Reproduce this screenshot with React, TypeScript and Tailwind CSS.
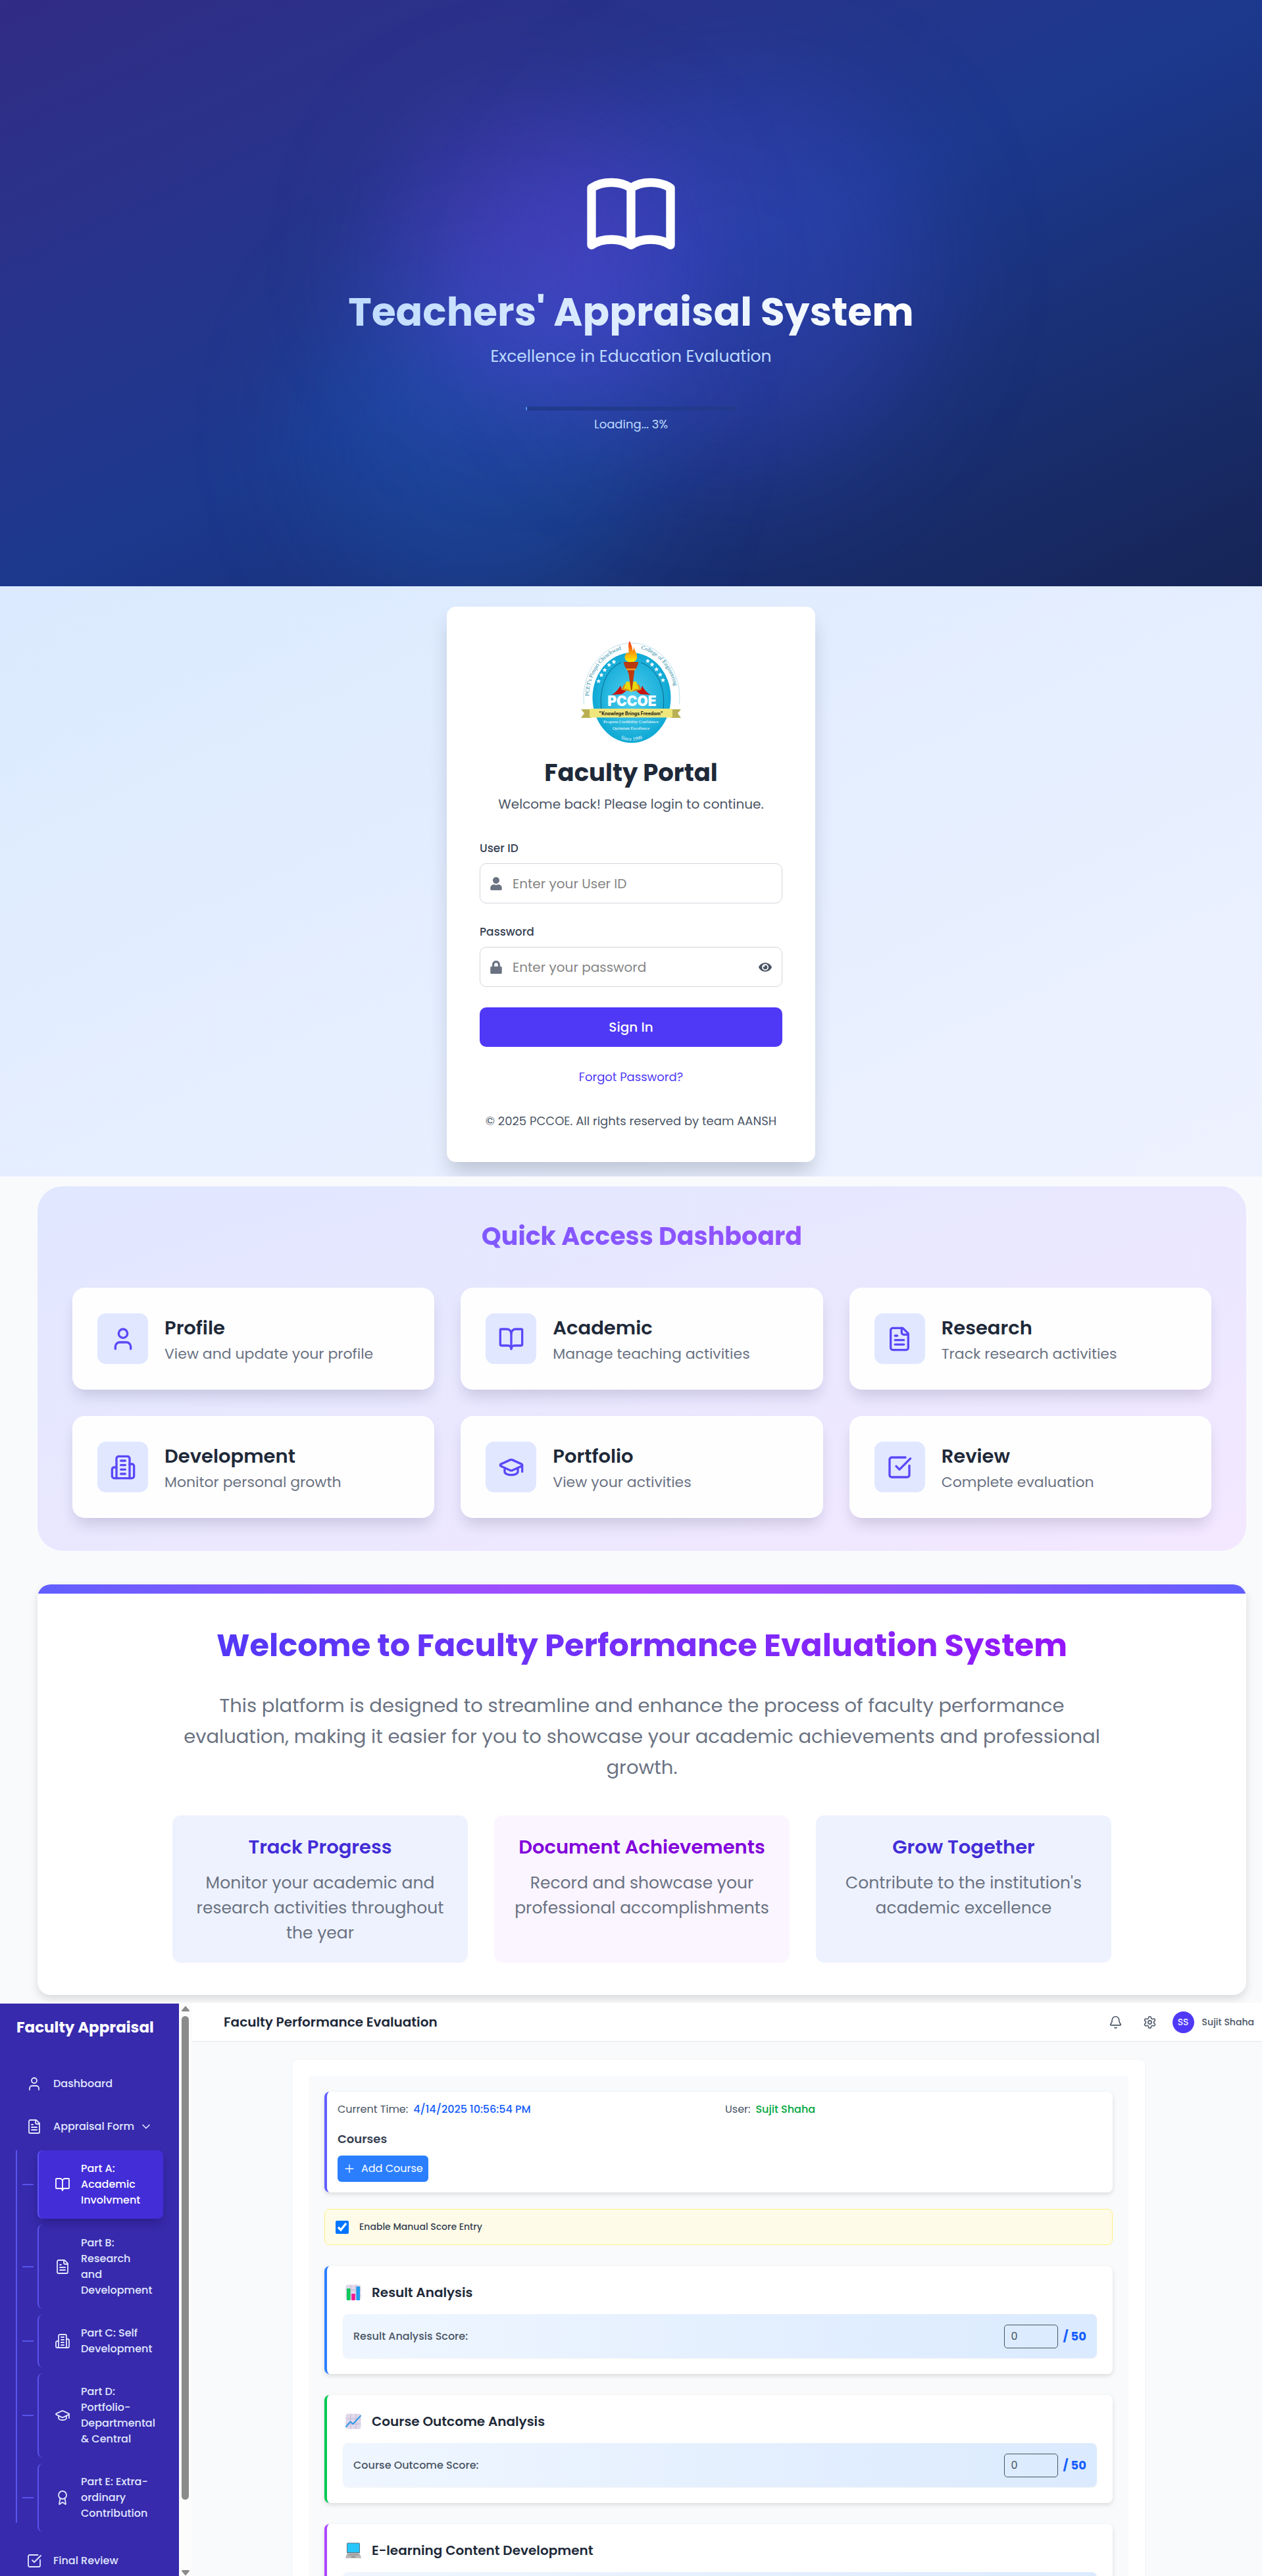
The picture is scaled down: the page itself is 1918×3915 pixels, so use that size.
import React from "react";
import type { ReactNode } from "react";
import { FaEye, FaLock, FaUser } from "react-icons/fa";

/* ---------- line icons ---------- */

type IconProps = { className?: string; strokeWidth?: number };

function LineIcon({ className, strokeWidth = 2, children }: IconProps & { children: ReactNode }) {
  return (
    <svg
      viewBox="0 0 24 24"
      fill="none"
      stroke="currentColor"
      strokeWidth={strokeWidth}
      strokeLinecap="round"
      strokeLinejoin="round"
      aria-hidden="true"
      className={className}
    >
      {children}
    </svg>
  );
}

const UserIcon = (p: IconProps) => (
  <LineIcon {...p}>
    <path d="M19 21v-2a4 4 0 0 0-4-4H9a4 4 0 0 0-4 4v2" />
    <circle cx="12" cy="7" r="4" />
  </LineIcon>
);
const BookIcon = (p: IconProps) => (
  <LineIcon {...p}>
    <path d="M12 7v14" />
    <path d="M3 18a1 1 0 0 1-1-1V4a1 1 0 0 1 1-1h5a4 4 0 0 1 4 4 4 4 0 0 1 4-4h5a1 1 0 0 1 1 1v13a1 1 0 0 1-1 1h-6a3 3 0 0 0-3 3 3 3 0 0 0-3-3z" />
  </LineIcon>
);
const FileIcon = (p: IconProps) => (
  <LineIcon {...p}>
    <path d="M15 2H6a2 2 0 0 0-2 2v16a2 2 0 0 0 2 2h12a2 2 0 0 0 2-2V7Z" />
    <path d="M14 2v4a2 2 0 0 0 2 2h4" />
    <path d="M10 9H8" />
    <path d="M16 13H8" />
    <path d="M16 17H8" />
  </LineIcon>
);
const BuildingIcon = (p: IconProps) => (
  <LineIcon {...p}>
    <path d="M6 22V4a2 2 0 0 1 2-2h8a2 2 0 0 1 2 2v18Z" />
    <path d="M6 12H4a2 2 0 0 0-2 2v6a2 2 0 0 0 2 2h2" />
    <path d="M18 9h2a2 2 0 0 1 2 2v9a2 2 0 0 1-2 2h-2" />
    <path d="M10 6h4" />
    <path d="M10 10h4" />
    <path d="M10 14h4" />
    <path d="M10 18h4" />
  </LineIcon>
);
const CapIcon = (p: IconProps) => (
  <LineIcon {...p}>
    <path d="M21.42 10.922a1 1 0 0 0-.019-1.838L12.83 5.18a2 2 0 0 0-1.66 0L2.6 9.08a1 1 0 0 0 0 1.832l8.57 3.908a2 2 0 0 0 1.66 0z" />
    <path d="M22 10v6" />
    <path d="M6 12.5V16a6 3 0 0 0 12 0v-3.5" />
  </LineIcon>
);
const CheckSquareIcon = (p: IconProps) => (
  <LineIcon {...p}>
    <path d="M21 10.5V19a2 2 0 0 1-2 2H5a2 2 0 0 1-2-2V5a2 2 0 0 1 2-2h12.5" />
    <path d="m9 11 3 3L22 4" />
  </LineIcon>
);
const AwardIcon = (p: IconProps) => (
  <LineIcon {...p}>
    <path d="m15.477 12.89 1.515 8.526a.5.5 0 0 1-.81.47l-3.58-2.687a1 1 0 0 0-1.197 0l-3.586 2.686a.5.5 0 0 1-.81-.469l1.514-8.526" />
    <circle cx="12" cy="8" r="6" />
  </LineIcon>
);
const ChevronIcon = (p: IconProps) => (
  <LineIcon {...p}>
    <path d="m6 9 6 6 6-6" />
  </LineIcon>
);
const PlusIcon = (p: IconProps) => (
  <LineIcon {...p}>
    <path d="M5 12h14" />
    <path d="M12 5v14" />
  </LineIcon>
);
const BellIcon = (p: IconProps) => (
  <LineIcon {...p}>
    <path d="M10.268 21a2 2 0 0 0 3.464 0" />
    <path d="M3.262 15.326A1 1 0 0 0 4 17h16a1 1 0 0 0 .74-1.673C19.41 13.956 18 12.499 18 8A6 6 0 0 0 6 8c0 4.499-1.411 5.956-2.738 7.326" />
  </LineIcon>
);
const GearIcon = (p: IconProps) => (
  <LineIcon {...p}>
    <path d="M12.22 2h-.44a2 2 0 0 0-2 2v.18a2 2 0 0 1-1 1.73l-.43.25a2 2 0 0 1-2 0l-.15-.08a2 2 0 0 0-2.73.73l-.22.38a2 2 0 0 0 .73 2.73l.15.1a2 2 0 0 1 1 1.72v.51a2 2 0 0 1-1 1.74l-.15.09a2 2 0 0 0-.73 2.73l.22.38a2 2 0 0 0 2.73.73l.15-.08a2 2 0 0 1 2 0l.43.25a2 2 0 0 1 1 1.73V20a2 2 0 0 0 2 2h.44a2 2 0 0 0 2-2v-.18a2 2 0 0 1 1-1.73l.43-.25a2 2 0 0 1 2 0l.15.08a2 2 0 0 0 2.73-.73l.22-.39a2 2 0 0 0-.73-2.73l-.15-.08a2 2 0 0 1-1-1.74v-.5a2 2 0 0 1 1-1.74l.15-.09a2 2 0 0 0 .73-2.73l-.22-.38a2 2 0 0 0-2.73-.73l-.15.08a2 2 0 0 1-2 0l-.43-.25a2 2 0 0 1-1-1.73V4a2 2 0 0 0-2-2z" />
    <circle cx="12" cy="12" r="3" />
  </LineIcon>
);

/* ---------- splash ---------- */

function Splash() {
  return (
    <section className="relative flex min-h-[891px] flex-col items-center overflow-hidden bg-linear-to-br from-indigo-900 via-blue-900 to-blue-950 px-4 pt-[244px]">
      <div aria-hidden="true" className="absolute top-[400px] left-[25%] size-[520px] rounded-full bg-[#1f6fd8]/25 blur-[90px]" />
      <div aria-hidden="true" className="absolute top-[130px] left-[43%] size-[580px] rounded-full bg-[#4450e0]/30 blur-[90px]" />
      <div aria-hidden="true" className="absolute top-[180px] left-[31%] size-[440px] rounded-full bg-[#7048f0]/35 blur-[90px]" />
      <div className="relative flex flex-col items-center">
        <LineIcon className="size-40 text-white">
          <path d="M12 6.253v13m0-13C10.832 5.477 9.246 5 7.5 5S4.168 5.477 3 6.253v13C4.168 18.477 5.754 18 7.5 18s3.332.477 4.5 1.253m0-13C13.168 5.477 14.754 5 16.5 5c1.747 0 3.332.477 4.5 1.253v13C19.832 18.477 18.247 18 16.5 18c-1.746 0-3.332.477-4.5 1.253" />
        </LineIcon>
        <h1 className="mt-[34px] bg-linear-to-r from-blue-200 to-white bg-clip-text text-center text-6xl leading-[72px] font-bold text-transparent">
          Teachers' Appraisal System
        </h1>
        <p className="mt-[14px] text-center text-[25px] leading-9 text-blue-200">Excellence in Education Evaluation</p>
        <div role="progressbar" aria-label="Loading" aria-valuenow={3} className="mt-[58px] h-1.5 w-80 overflow-hidden rounded-full bg-[#213a8c]">
          <div className="h-full w-0.5 bg-blue-400" />
        </div>
        <p className="mt-[7px] text-[18px] leading-7 text-blue-200">Loading... 3%</p>
      </div>
    </section>
  );
}

/* ---------- login ---------- */

const LOGO_STARS = [
  [26.7, 63], [31, 53.7], [36, 46], [42.7, 38.3], [50, 33.7],
  [101.5, 32.3], [108, 37.7], [114.7, 45], [120.4, 53], [124.6, 61.5],
];

function CollegeLogo() {
  return (
    <svg viewBox="0 0 153 160" role="img" aria-label="PCCOE" className="h-40 w-[153px]">
      <defs>
        <radialGradient id="disc" cx="0.5" cy="0.5" r="0.55">
          <stop offset="0" stopColor="#52cff0" />
          <stop offset="1" stopColor="#08a5d2" />
        </radialGradient>
        <linearGradient id="flame" x1="0" y1="0" x2="0" y2="1">
          <stop offset="0" stopColor="#f4281c" />
          <stop offset="0.55" stopColor="#ff9a0a" />
          <stop offset="1" stopColor="#fff000" />
        </linearGradient>
        <path id="arcLeft" d="M12 86A66 75 0 0 1 69 13.500" />
        <path id="arcRight" d="M91 14.500A66 75 0 0 1 143 92" />
        <path id="arcBottom" d="M56 149Q77 158 98 149" />
      </defs>
      <path d="M4.500 98A73 83 0 1 1 149.500 98" fill="#fff" stroke="#8fcddd" strokeWidth="0.6" />
      <ellipse cx="77" cy="88.500" rx="59.500" ry="68.500" fill="url(#disc)" />
      <path d="M61 35C38 44 27 76 31 106M91 35C117 44 129 76 125 106" fill="none" stroke="#0a5f80" strokeWidth="0.9" />
      <g fontFamily="Liberation Serif, serif" fontSize="8.500" fill="#1c87a3">
        <text><textPath href="#arcLeft">PCET's Pimpri Chinchwad</textPath></text>
        <text><textPath href="#arcRight">College of Engineering</textPath></text>
      </g>
      {LOGO_STARS.map(([x, y]) => (
        <path
          key={`${x}-${y}`}
          d={`M${x} ${y - 3.4}l1 2.300 2.500.2-1.900 1.700.6 2.500-2.200-1.300-2.200 1.300.6-2.500-1.900-1.700 2.500-.2z`}
          fill="#fff"
        />
      ))}
      <path d="M46 84C52 82 56 76 60 70L62 76 69 78 62 83ZM106 84C101 82 96 76 93 70L91 76 84 78 90 83Z" fill="#c8140e" />
      <path d="M61 76L66 67 75 79ZM92 76L87 67 78 79Z" fill="#e08a12" />
      <path d="M65 75L69 64Q75 63 76.500 68 78 63 84 64L88 75Q81 74 76.500 80 72 74 65 75Z" fill="#e8d80e" />
      <path d="M72 49H81L77.500 77H76Z" fill="#bf3a0c" />
      <path d="M64.500 34H87.500L86 39Q84 45 81 46V50H71V46Q68 45 66 39Z" fill="#b83a10" />
      <path d="M69 44H83V46.500H69Z" fill="#f0a020" />
      <path d="M74 2C76 8 79 12 78 17 80 16 80.500 13 80 11 82 18 86 22 85 28Q84 33 79 34H72Q66 31 66.500 26C67 23 69 22 70 19L72 22C74 15 70 9 74 2Z" fill="url(#flame)" />
      <text x="77.500" y="101" textAnchor="middle" fontFamily="Inter, sans-serif" fontWeight="900" fontSize="21" fill="#fff">PCCOE</text>
      <path d="M0 106H16V119H0L5 112ZM152 106H136V119H152L147 112Z" fill="#b9b054" />
      <rect x="13" y="105" width="126" height="13.500" rx="2" fill="#efe67c" />
      <text x="76" y="114.500" textAnchor="middle" fontFamily="Inter, sans-serif" fontWeight="700" fontSize="7" fill="#1a1a10">"Knowlege Brings Freedom"</text>
      <g fontFamily="Liberation Serif, serif" fill="#fff" textAnchor="middle">
        <text x="76" y="126.500" fontSize="6.500">Progress Credibility Confidence</text>
        <text x="76" y="137" fontSize="6.500">Optimism Excellence</text>
        <text fontSize="7.500"><textPath href="#arcBottom" startOffset="50%">Since 1999</textPath></text>
      </g>
    </svg>
  );
}

function Login() {
  return (
    <section className="flex justify-center overflow-hidden bg-linear-to-br from-blue-100 to-indigo-50 px-4 pt-[31px] pb-[22px]">
      <form className="flex w-full max-w-[560px] flex-col rounded-[14px] bg-white p-[50px] shadow-[0_20px_30px_-5px_rgba(30,41,59,0.22)]">
        <div className="flex justify-center">
          <CollegeLogo />
        </div>
        <h2 className="mt-5 text-center text-[37px] leading-[44px] font-bold text-gray-800">Faculty Portal</h2>
        <p className="mt-[11px] text-center text-xl leading-[30px] text-gray-600">Welcome back! Please login to continue.</p>

        <label htmlFor="user-id" className="mt-10 text-[17px] leading-6 font-medium text-gray-700">User ID</label>
        <div className="mt-[11px] flex h-[61px] items-center gap-4 rounded-[10px] border border-gray-300 px-[15px]">
          <FaUser className="h-5 w-[18px] text-gray-500" aria-hidden="true" />
          <input id="user-id" type="text" placeholder="Enter your User ID" className="min-w-0 flex-1 bg-transparent text-xl outline-none placeholder:text-[#848484]" />
        </div>

        <label htmlFor="password" className="mt-[31px] text-[17px] leading-6 font-medium text-gray-700">Password</label>
        <div className="mt-[11px] flex h-[61px] items-center gap-4 rounded-[10px] border border-gray-300 px-[15px]">
          <FaLock className="h-5 w-[18px] text-gray-500" aria-hidden="true" />
          <input id="password" type="password" placeholder="Enter your password" className="min-w-0 flex-1 bg-transparent text-xl outline-none placeholder:text-[#848484]" />
          <button type="button" aria-label="Show password" className="text-gray-600">
            <FaEye className="size-5" />
          </button>
        </div>

        <button type="submit" className="mt-[31px] h-[60px] rounded-[10px] bg-indigo-600 text-xl font-medium text-white">Sign In</button>
        <a href="#forgot" className="mt-[34px] self-center text-[18px] leading-6 text-indigo-600">Forgot Password?</a>
        <p className="mt-[43px] text-center text-[18px] leading-6 text-gray-600">© 2025 PCCOE. All rights reserved by team AANSH</p>
      </form>
    </section>
  );
}

/* ---------- dashboard ---------- */

const QUICK_LINKS = [
  { title: "Profile", text: "View and update your profile", Icon: UserIcon },
  { title: "Academic", text: "Manage teaching activities", Icon: BookIcon },
  { title: "Research", text: "Track research activities", Icon: FileIcon },
  { title: "Development", text: "Monitor personal growth", Icon: BuildingIcon },
  { title: "Portfolio", text: "View your activities", Icon: CapIcon },
  { title: "Review", text: "Complete evaluation", Icon: CheckSquareIcon },
];

const HIGHLIGHTS = [
  { title: "Track Progress", text: "Monitor your academic and research activities throughout the year", tile: "bg-indigo-50", heading: "text-indigo-700" },
  { title: "Document Achievements", text: "Record and showcase your professional accomplishments", tile: "bg-purple-50", heading: "text-purple-700" },
  { title: "Grow Together", text: "Contribute to the institution's academic excellence", tile: "bg-indigo-50", heading: "text-indigo-700" },
];

function Dashboard() {
  return (
    <section className="overflow-hidden bg-[#f9fafc] pt-[15px] pr-6 pb-3 pl-[57px]">
      <div className="rounded-[38px] bg-linear-to-br from-indigo-100 to-purple-100 px-[53px] pt-[52px] pb-[50px]">
        <h2 className="bg-linear-to-r from-indigo-500 to-purple-500 bg-clip-text text-center text-[38px] leading-[48px] font-bold text-transparent">
          Quick Access Dashboard
        </h2>
        <div className="mt-[54px] grid grid-cols-3 gap-10">
          {QUICK_LINKS.map(({ title, text, Icon }) => (
            <a
              key={title}
              href={`#${title.toLowerCase()}`}
              className="flex items-center gap-[25px] rounded-[19px] bg-white/95 px-[38px] py-[39px] shadow-[0_14px_22px_-5px_rgba(30,20,60,0.16)]"
            >
              <span className="flex size-[77px] shrink-0 items-center justify-center rounded-[13px] bg-indigo-100">
                <Icon className="size-10 text-[#5a48f8]" />
              </span>
              <span className="-my-2 flex flex-col pt-1.5">
                <span className="text-[29px] leading-[39px] font-semibold text-gray-800">{title}</span>
                <span className="text-[22px] leading-[39px] text-gray-500">{text}</span>
              </span>
            </a>
          ))}
        </div>
      </div>

      <div className="mt-[51px] overflow-hidden rounded-[20px] bg-white shadow-[0_6px_14px_0_rgba(0,0,0,0.13)]">
        <div className="h-[14px] bg-linear-to-r from-indigo-500 via-purple-500 to-indigo-500" />
        <div className="mx-auto flex max-w-[1427px] flex-col items-center pt-[47px] pb-[49px]">
          <h2 className="w-full bg-linear-to-r from-indigo-600 to-purple-600 bg-clip-text text-center text-5xl leading-[64px] font-bold text-transparent">
            Welcome to Faculty Performance Evaluation System
          </h2>
          <p className="mt-9 text-center text-[29px] leading-[47px] text-gray-500">
            This platform is designed to streamline and enhance the process of faculty performance evaluation, making it easier
            for you to showcase your academic achievements and professional growth.
          </p>
          <div className="mt-[49px] grid w-full grid-cols-3 gap-10">
            {HIGHLIGHTS.map((h) => (
              <div key={h.title} className={`rounded-[13px] px-5 py-[26px] text-center ${h.tile}`}>
                <h3 className={`text-[29px] leading-[44px] font-semibold whitespace-nowrap ${h.heading}`}>{h.title}</h3>
                <p className="mt-[14px] text-[25px] leading-[38px] text-gray-500">{h.text}</p>
              </div>
            ))}
          </div>
        </div>
      </div>
    </section>
  );
}

/* ---------- appraisal form ---------- */

const PARTS = [
  { text: "Part A:\nAcademic\nInvolvment", Icon: BookIcon, active: true },
  { text: "Part B:\nResearch\nand\nDevelopment", Icon: FileIcon },
  { text: "Part C: Self\nDevelopment", Icon: BuildingIcon },
  { text: "Part D:\nPortfolio-\nDepartmental\n& Central", Icon: CapIcon },
  { text: "Part E: Extra-\nordinary\nContribution", Icon: AwardIcon },
];

function NavRow({ Icon, children }: { Icon: (p: IconProps) => ReactNode; children: ReactNode }) {
  return (
    <a href="#section" className="flex h-14 shrink-0 items-center gap-[17px] pl-10 text-base font-medium text-indigo-100">
      <Icon className="size-6" strokeWidth={1.8} />
      {children}
    </a>
  );
}

function Sidebar() {
  return (
    <aside className="mt-px flex w-[272px] shrink-0 flex-col overflow-hidden bg-indigo-800 pt-[18px]">
      <h2 className="pl-[25px] text-[23px] leading-9 font-bold text-white">Faculty Appraisal</h2>
      <nav className="mt-10 flex flex-col">
        <NavRow Icon={UserIcon}>Dashboard</NavRow>
        <div className="mt-[9px]">
          <NavRow Icon={FileIcon}>
            <span className="flex items-center gap-2">
              Appraisal Form
              <ChevronIcon className="size-5" />
            </span>
          </NavRow>
        </div>
        <div className="mt-2 flex pr-6 pl-6">
          <span className="mb-[14px] w-0.5 bg-indigo-500/80" />
          <ul className="ml-2 flex flex-1 flex-col gap-[9px]">
            {PARTS.map(({ text, Icon, active }) => (
              <li key={text} className="flex items-center gap-1.5">
                <span className="h-0.5 w-[17px] bg-indigo-500/80" />
                <a
                  href="#part"
                  className={`flex flex-1 items-center gap-4 rounded-lg border-l-2 border-indigo-500/80 py-4 pl-6 text-base leading-6 font-medium whitespace-pre ${
                    active ? "bg-indigo-700 text-white shadow-[0_8px_14px_-3px_rgba(20,10,70,0.35)]" : "text-indigo-100"
                  }`}
                >
                  <Icon className="size-6 shrink-0" strokeWidth={1.8} />
                  {text}
                </a>
              </li>
            ))}
          </ul>
        </div>
        <div className="mt-4">
          <NavRow Icon={CheckSquareIcon}>Final Review</NavRow>
        </div>
      </nav>
    </aside>
  );
}

function ScrollTrack() {
  return (
    <div aria-hidden="true" className="flex w-[19px] shrink-0 flex-col items-center bg-[#fcfcfc] pt-1">
      <svg viewBox="0 0 12 9" className="h-[9px] w-3" fill="#8b8b8b"><path d="M6 0.500L12 7.500Q12 9 11 9H1Q0 9 0 7.500Z" /></svg>
      <div className="mt-[7px] h-[735px] w-[11px] rounded-full bg-[#8b8b8b]" />
      <svg viewBox="0 0 12 9" className="mt-auto h-[9px] w-3" fill="#8b8b8b"><path d="M6 8.500L12 1.500Q12 0 11 0H1Q0 0 0 1.500Z" /></svg>
    </div>
  );
}

function Header() {
  return (
    <header className="flex h-[59px] shrink-0 items-center border-b border-gray-200 bg-white pr-3 pl-[49px] shadow-xs">
      <h1 className="text-xl leading-7 font-semibold text-gray-800">Faculty Performance Evaluation</h1>
      <div className="ml-auto flex items-center">
        <button type="button" aria-label="Notifications" className="text-gray-600"><BellIcon className="size-[21px]" strokeWidth={1.8} /></button>
        <button type="button" aria-label="Settings" className="ml-[31px] text-gray-600"><GearIcon className="size-[21px]" strokeWidth={1.8} /></button>
        <span className="ml-6 flex size-[33px] items-center justify-center rounded-full bg-indigo-600 text-[14px] font-medium text-indigo-50">SS</span>
        <span className="ml-3 text-[14px] font-medium text-gray-600">Sujit Shaha</span>
      </div>
    </header>
  );
}

const GridPaper = () => (
  <>
    <rect x="0.500" y="0.500" width="23" height="23" rx="3" fill="#e0d8ea" />
    <path d="M8 .5v23M16 .5v23M.5 8h23M.5 16h23" stroke="#c3b6d6" strokeWidth="1" fill="none" />
  </>
);

const BarsPicture = () => (
  <svg viewBox="0 0 24 24" className="size-6" aria-hidden="true">
    <GridPaper />
    <rect x="2" y="6" width="5.500" height="18" rx="0.800" fill="#12c95c" />
    <rect x="9.300" y="14" width="5.500" height="10" rx="0.800" fill="#ef1b94" />
    <rect x="16.500" y="3" width="5.500" height="21" rx="0.800" fill="#1a9cf0" />
  </svg>
);
const TrendPicture = () => (
  <svg viewBox="0 0 24 24" className="size-6" aria-hidden="true">
    <GridPaper />
    <path d="M1 20L7.500 12.500 11.500 16 23 3.500" fill="none" stroke="#2f9be8" strokeWidth="2" strokeLinecap="round" strokeLinejoin="round" />
  </svg>
);
const LaptopPicture = () => (
  <svg viewBox="0 0 24 24" className="size-6" aria-hidden="true">
    <rect x="2" y="0.500" width="20" height="16" rx="1.500" fill="#5f7385" />
    <rect x="3" y="1.500" width="18" height="13.500" fill="#26c6fa" />
    <path d="M3 16H21L24 22.500Q24 24 23 24H1Q0 24 0 22.500Z" fill="#b9b9b9" />
    <path d="M4.500 17.500H19.500L20.500 20H3.500Z" fill="#a09fa0" />
    <rect x="9" y="21" width="6" height="1.800" fill="#8d8d8d" />
  </svg>
);

type Score = { title: string; label?: string; accent: string; Picture: () => ReactNode };

const SCORES: Score[] = [
  { title: "Result Analysis", label: "Result Analysis Score:", accent: "border-blue-500", Picture: BarsPicture },
  { title: "Course Outcome Analysis", label: "Course Outcome Score:", accent: "border-green-500", Picture: TrendPicture },
  { title: "E-learning Content Development", accent: "border-purple-500", Picture: LaptopPicture },
];

function ScoreCard({ title, label, accent, Picture }: Score) {
  return (
    <div className={`rounded-lg border-l-4 bg-white p-6 shadow-[0_3px_7px_rgba(0,0,0,0.12)] ${accent}`}>
      <h3 className="ml-1 flex items-center gap-4 text-xl leading-8 font-semibold text-gray-800">
        <Picture />
        {title}
      </h3>
      <label className="mt-[17px] flex h-[67px] items-center rounded-lg bg-linear-to-r from-blue-50 to-blue-100 px-4 text-base font-medium text-gray-600 shadow-xs">
        {label && (
          <>
            {label}
            <input
              type="number"
              defaultValue={0}
              className="mr-2 ml-auto h-9 w-[82px] rounded-[5px] border border-gray-600 px-2.5 text-base font-normal text-gray-600 outline-none"
            />
            <span className="text-[18px] font-bold text-blue-600">/ 50</span>
          </>
        )}
      </label>
    </div>
  );
}

function Appraisal() {
  return (
    <section className="flex h-[871px] overflow-hidden bg-white">
      <Sidebar />
      <ScrollTrack />
      <div className="flex min-w-0 flex-1 flex-col">
        <Header />
        <main className="min-h-0 flex-1 overflow-hidden bg-[#f9fafc] pt-[27px] pr-[25px]">
          <div className="mx-auto max-w-[1296px] rounded-lg bg-white p-[25px] shadow-[0_0_3px_rgba(0,0,0,0.06)]">
            <div className="bg-[#f9fafc] p-6">
              <div className="rounded-lg border-l-4 border-indigo-500 bg-white px-4 pt-[14px] pb-4 shadow-[0_3px_7px_rgba(0,0,0,0.12)]">
                <div className="grid grid-cols-2 gap-4 text-base leading-[26px] text-gray-600">
                  <p className="flex gap-2">
                    Current Time:<span className="font-medium text-blue-600">4/14/2025 10:56:54 PM</span>
                  </p>
                  <p className="flex gap-2">
                    User:<span className="font-medium text-green-600">Sujit Shaha</span>
                  </p>
                </div>
                <h3 className="mt-[19px] text-[18px] leading-[26px] font-semibold text-gray-700">Courses</h3>
                <button type="button" className="mt-3 flex h-10 items-center gap-2 rounded-[6px] bg-blue-500 px-2 text-base text-white">
                  <PlusIcon className="size-5" strokeWidth={1.6} />
                  Add Course
                </button>
              </div>

              <label className="mt-[25px] flex h-[55px] items-center gap-4 rounded-lg border border-yellow-200 bg-yellow-50 px-4 text-[14px] font-medium text-gray-700">
                <input type="checkbox" defaultChecked className="size-5 accent-[#0075ff]" />
                Enable Manual Score Entry
              </label>

              <div className="mt-8 flex flex-col gap-8">
                {SCORES.map((score) => (
                  <ScoreCard key={score.title} {...score} />
                ))}
              </div>
            </div>
          </div>
        </main>
      </div>
    </section>
  );
}

export default function App() {
  return (
    <div className="font-['Poppins','Inter',sans-serif] antialiased">
      <Splash />
      <Login />
      <Dashboard />
      <Appraisal />
    </div>
  );
}
